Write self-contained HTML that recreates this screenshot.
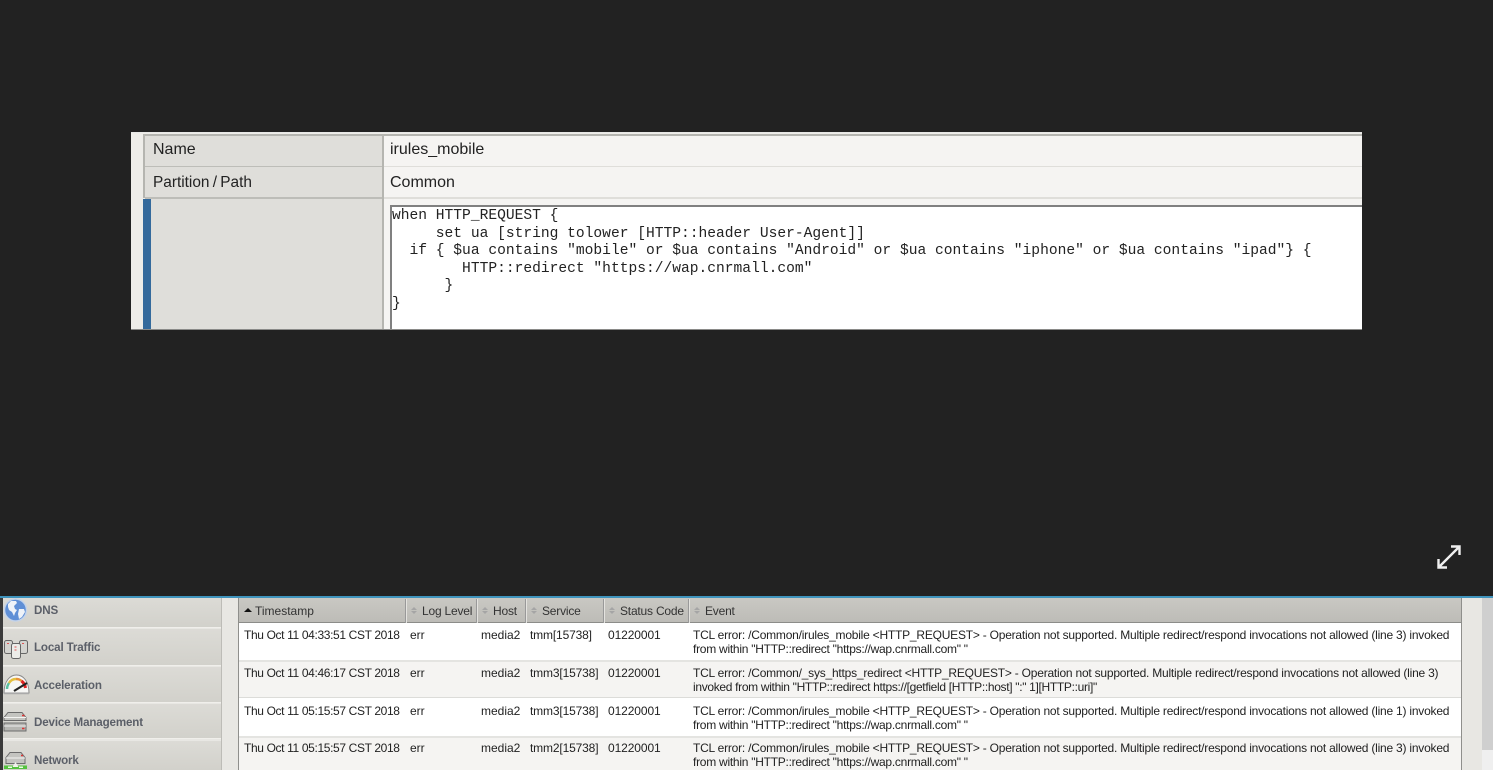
<!DOCTYPE html>
<html><head><meta charset="utf-8"><style>
html,body{margin:0;padding:0;background:#222;width:1493px;height:770px;overflow:hidden}
body{position:relative;font-family:"Liberation Sans",Arial,sans-serif}
.a{position:absolute}
.t{position:absolute;white-space:pre;line-height:14px}
.m{position:absolute;white-space:pre;font-family:"Liberation Mono",monospace;font-size:14.6px;line-height:17.5px;color:#222;left:392px}
.big{font-size:16px;color:#222}
.log{font-size:12px;color:#222}
.ts{letter-spacing:-.36px}
.sv{letter-spacing:-.15px}
.cd{letter-spacing:-.1px}
.ev{letter-spacing:-.22px}
.hd{font-size:12px;color:#333;letter-spacing:-.2px}
.nav{position:absolute;left:3px;width:218px;background:linear-gradient(#dcdbd6,#d2d1cb);border-bottom:1px solid #f0efeb}
.navt{position:absolute;left:34px;font-size:11.6px;font-weight:bold;color:#5b5f68;white-space:pre;line-height:14px;letter-spacing:-.15px}
.sep{position:absolute;top:599px;width:1px;height:24px;background:#e4e3df;border-left:1px solid #999}
.ar{position:absolute;top:607px;width:0;height:0;border-left:3px solid transparent;border-right:3px solid transparent}
</style></head><body>

<!-- upper capture -->
<div class="a" style="left:131px;top:132px;width:1231px;height:198px;background:#eeede9;border-top:1px solid #e8e8e6;box-sizing:border-box"></div>
<div class="a" style="left:143px;top:134px;width:1219px;height:2px;background:#b5b5b0"></div>
<div class="a" style="left:143px;top:134px;width:2px;height:64px;background:#b5b5b0"></div>
<div class="a" style="left:145px;top:136px;width:237px;height:194px;background:#dfdeda"></div>
<div class="a" style="left:383px;top:136px;width:979px;height:194px;background:#f5f4f2"></div>
<div class="a" style="left:382px;top:134px;width:2px;height:196px;background:#b5b5b0"></div>
<div class="a" style="left:145px;top:166px;width:237px;height:1px;background:#bdbdb8"></div>
<div class="a" style="left:145px;top:197px;width:237px;height:2px;background:#bdbdb8"></div>
<div class="a" style="left:384px;top:166px;width:978px;height:1px;background:#dfdeda"></div>
<div class="a" style="left:384px;top:197px;width:978px;height:2px;background:#dfdeda"></div>
<div class="a" style="left:143px;top:199px;width:8px;height:131px;background:#346a9c"></div>
<div class="a" style="left:390px;top:205px;width:972px;height:125px;background:#fff;border-top:2px solid #808080;border-left:2px solid #808080;box-sizing:border-box"></div>
<div class="a" style="left:131px;top:329px;width:1231px;height:1px;background:#8a8a88"></div>

<div class="t big" style="left:153px;top:143px">Name</div>
<div class="t big" style="left:153px;top:176px;font-size:15.4px;word-spacing:-1px">Partition / Path</div>
<div class="t big" style="left:390px;top:143px">irules_mobile</div>
<div class="t big" style="left:390px;top:176px">Common</div>

<div class="m" style="top:208px">when HTTP_REQUEST {
     set ua [string tolower [HTTP::header User-Agent]]
  if { $ua contains "mobile" or $ua contains "Android" or $ua contains "iphone" or $ua contains "ipad"} {
        HTTP::redirect "https://wap.cnrmall.com"
      }
}</div>

<!-- expand icon -->
<svg class="a" style="left:1436px;top:544px" width="26" height="26" viewBox="0 0 26 26" fill="none" stroke="#f0f0f0" stroke-width="2.400"><path d="M3 23L23 3M15 2.500h8.500v8.500M2.500 15v8.500H11"/></svg>

<!-- lower capture -->
<div class="a" style="left:0;top:597px;width:1493px;height:173px;background:#e8e7e3"></div>
<div class="a" style="left:0;top:596px;width:1493px;height:2px;background:#3f94bd"></div>
<div class="a" style="left:0;top:598px;width:3px;height:172px;background:#3a3a3a"></div>
<div class="a" style="left:1482px;top:598px;width:11px;height:152px;background:#cfcfcf"></div>
<div class="a" style="left:1482px;top:750px;width:11px;height:20px;background:#efefef"></div>

<!-- nav -->
<div class="nav" style="top:598px;height:29px"></div>
<div class="nav" style="top:629px;height:36px"></div>
<div class="nav" style="top:667px;height:35px"></div>
<div class="nav" style="top:704px;height:34px"></div>
<div class="nav" style="top:741px;height:29px;border:0"></div>
<div class="a" style="left:221px;top:598px;width:1px;height:172px;background:#bdbcb7"></div>
<div class="navt" style="top:604px">DNS</div>
<div class="navt" style="top:641px">Local Traffic</div>
<div class="navt" style="top:679px">Acceleration</div>
<div class="navt" style="top:716px">Device Management</div>
<div class="navt" style="top:754px">Network</div>

<!-- DNS globe -->
<svg class="a" style="left:3px;top:598px" width="24" height="25" viewBox="0 0 24 25"><circle cx="12.500" cy="12" r="11" fill="#5f8fd6" stroke="#c3d3ea" stroke-width="1.500"/><path d="M5 6l3-3 5 0 1 2-3 3 1 3 2 1-2 3-1 3-2-4-3-2-1-3zM16 11l5 0 1 3-3 5-3 2-1-5z" fill="#eef2f8"/></svg>
<!-- local traffic -->
<svg class="a" style="left:4px;top:637px" width="24" height="23" viewBox="0 0 24 23" stroke="#666" stroke-width="1"><rect x=".5" y="3.500" width="8" height="13" rx="2" fill="#d4d4d0"/><rect x="15.500" y="3.500" width="8" height="13" rx="2" fill="#d4d4d0"/><rect x="7.500" y="6.500" width="9" height="15" rx="2" fill="#ecece8"/><path d="M3 6.500h2M18 6.500h2M10.500 10h2M10.500 13h2" stroke="#d55"/></svg>
<!-- acceleration gauge -->
<svg class="a" style="left:3px;top:673px" width="27" height="23" viewBox="0 0 27 23"><path d="M1 20C1 8 7 2 13.500 2S26 8 26 20z" fill="#f7f7f5" stroke="#888"/><path d="M4 16c0-2 .7-4 2-6" fill="none" stroke="#5cc0a0" stroke-width="2.500"/><path d="M6 10c1.500-2.500 4-4 7-4" fill="none" stroke="#e3c040" stroke-width="2.500"/><path d="M13 6c2 0 4 .5 5.500 2" fill="none" stroke="#e8923a" stroke-width="2.500"/><path d="M18.500 8c2 1.500 3.500 4 4 7" fill="none" stroke="#d22" stroke-width="3"/><path d="M11 18l13-8" stroke="#222" stroke-width="2.200"/><path d="M1 20.500h25" stroke="#aaa" stroke-width="1.500"/></svg>
<!-- device -->
<svg class="a" style="left:3px;top:711px" width="24" height="23" viewBox="0 0 24 23"><path d="M5 1.500h14l4 5v3H1v-3z" fill="#c4c4c0" stroke="#6c6c6c"/><path d="M1 6.500h22" stroke="#f4f4f2"/><path d="M1 12h22v8H1z" fill="#b6b6b2" stroke="#6c6c6c"/><path d="M1 15h22" stroke="#eee"/><path d="M19 4.500h2.500M19 17.500h2.500" stroke="#d33" stroke-width="1.500"/></svg>
<!-- network -->
<svg class="a" style="left:3px;top:751px" width="25" height="19" viewBox="0 0 25 19"><path d="M7 1.500h11l4 5v6H3v-6z" fill="#c4c4c0" stroke="#6c6c6c"/><path d="M3 7h19" stroke="#f4f4f2"/><path d="M18 4.500h2" stroke="#d33" stroke-width="1.500"/><rect x="1" y="14.500" width="23" height="3.500" fill="#54c23e"/><rect x="5" y="15.500" width="4" height="1.500" fill="#e8ffe0"/><rect x="16" y="15.500" width="4" height="1.500" fill="#e8ffe0"/><path d="M12.500 11l3 5h-6z" fill="#f2f2ee"/></svg>

<!-- table -->
<div class="a" style="left:238px;top:598px;width:1px;height:172px;background:#8f8f8c"></div>
<div class="a" style="left:1461px;top:598px;width:1px;height:172px;background:#8f8f8c"></div>
<div class="a" style="left:239px;top:598px;width:1222px;height:24px;background:linear-gradient(#c9c8c3,#bdbcb7);border-bottom:1px solid #8c8c89"></div>
<div class="a" style="left:239px;top:623px;width:1222px;height:37px;background:#fff"></div>
<div class="a" style="left:239px;top:660px;width:1222px;height:2px;background:#e4e4e1"></div>
<div class="a" style="left:239px;top:662px;width:1222px;height:35px;background:#f5f4f2"></div>
<div class="a" style="left:239px;top:697px;width:1222px;height:1px;background:#dcdcd9"></div>
<div class="a" style="left:239px;top:698px;width:1222px;height:38px;background:#fff"></div>
<div class="a" style="left:239px;top:736px;width:1222px;height:2px;background:#e4e4e1"></div>
<div class="a" style="left:239px;top:738px;width:1222px;height:32px;background:#f5f4f2"></div>

<div class="sep" style="left:405px"></div>
<div class="sep" style="left:476px"></div>
<div class="sep" style="left:525px"></div>
<div class="sep" style="left:603px"></div>
<div class="sep" style="left:688px"></div>

<div class="ar" style="left:244px;top:608px;border-left-width:4px;border-right-width:4px;border-bottom:4px solid #111"></div>
<div class="t hd" style="left:255px;top:604px;letter-spacing:0">Timestamp</div>
<div class="ar" style="left:411px;border-bottom:3.500px solid #a5a5a5"></div><div class="ar" style="left:411px;top:611px;border-top:3.500px solid #a5a5a5"></div>
<div class="t hd" style="left:422px;top:604px">Log Level</div>
<div class="ar" style="left:482px;border-bottom:3.500px solid #a5a5a5"></div><div class="ar" style="left:482px;top:611px;border-top:3.500px solid #a5a5a5"></div>
<div class="t hd" style="left:493px;top:604px">Host</div>
<div class="ar" style="left:531px;border-bottom:3.500px solid #a5a5a5"></div><div class="ar" style="left:531px;top:611px;border-top:3.500px solid #a5a5a5"></div>
<div class="t hd" style="left:542px;top:604px">Service</div>
<div class="ar" style="left:609px;border-bottom:3.500px solid #a5a5a5"></div><div class="ar" style="left:609px;top:611px;border-top:3.500px solid #a5a5a5"></div>
<div class="t hd" style="left:620px;top:604px">Status Code</div>
<div class="ar" style="left:694px;border-bottom:3.500px solid #a5a5a5"></div><div class="ar" style="left:694px;top:611px;border-top:3.500px solid #a5a5a5"></div>
<div class="t hd" style="left:705px;top:604px">Event</div>

<div class="t log ts" style="left:244px;top:628px">Thu Oct 11 04:33:51 CST 2018</div>
<div class="t log" style="left:410px;top:628px">err</div>
<div class="t log" style="left:481px;top:628px">media2</div>
<div class="t log sv" style="left:530px;top:628px">tmm[15738]</div>
<div class="t log cd" style="left:608px;top:628px">01220001</div>
<div class="t log ev" style="left:693px;top:628px">TCL error: /Common/irules_mobile &lt;HTTP_REQUEST&gt; - Operation not supported. Multiple redirect/respond invocations not allowed (line 3) invoked</div>
<div class="t log ev" style="left:693px;top:642px;letter-spacing:-.26px">from within "HTTP::redirect "https://wap.cnrmall.com" "</div>

<div class="t log ts" style="left:244px;top:666px">Thu Oct 11 04:46:17 CST 2018</div>
<div class="t log" style="left:410px;top:666px">err</div>
<div class="t log" style="left:481px;top:666px">media2</div>
<div class="t log sv" style="left:530px;top:666px">tmm3[15738]</div>
<div class="t log cd" style="left:608px;top:666px">01220001</div>
<div class="t log ev" style="left:693px;top:666px">TCL error: /Common/_sys_https_redirect &lt;HTTP_REQUEST&gt; - Operation not supported. Multiple redirect/respond invocations not allowed (line 3)</div>
<div class="t log ev" style="left:693px;top:680px;letter-spacing:-.32px">invoked from within "HTTP::redirect https://[getfield [HTTP::host] ":" 1][HTTP::uri]"</div>

<div class="t log ts" style="left:244px;top:704px">Thu Oct 11 05:15:57 CST 2018</div>
<div class="t log" style="left:410px;top:704px">err</div>
<div class="t log" style="left:481px;top:704px">media2</div>
<div class="t log sv" style="left:530px;top:704px">tmm3[15738]</div>
<div class="t log cd" style="left:608px;top:704px">01220001</div>
<div class="t log ev" style="left:693px;top:704px">TCL error: /Common/irules_mobile &lt;HTTP_REQUEST&gt; - Operation not supported. Multiple redirect/respond invocations not allowed (line 1) invoked</div>
<div class="t log ev" style="left:693px;top:718px;letter-spacing:-.26px">from within "HTTP::redirect "https://wap.cnrmall.com" "</div>

<div class="t log ts" style="left:244px;top:741px">Thu Oct 11 05:15:57 CST 2018</div>
<div class="t log" style="left:410px;top:741px">err</div>
<div class="t log" style="left:481px;top:741px">media2</div>
<div class="t log sv" style="left:530px;top:741px">tmm2[15738]</div>
<div class="t log cd" style="left:608px;top:741px">01220001</div>
<div class="t log ev" style="left:693px;top:741px">TCL error: /Common/irules_mobile &lt;HTTP_REQUEST&gt; - Operation not supported. Multiple redirect/respond invocations not allowed (line 3) invoked</div>
<div class="t log ev" style="left:693px;top:755px;letter-spacing:-.26px">from within "HTTP::redirect "https://wap.cnrmall.com" "</div>

</body></html>
